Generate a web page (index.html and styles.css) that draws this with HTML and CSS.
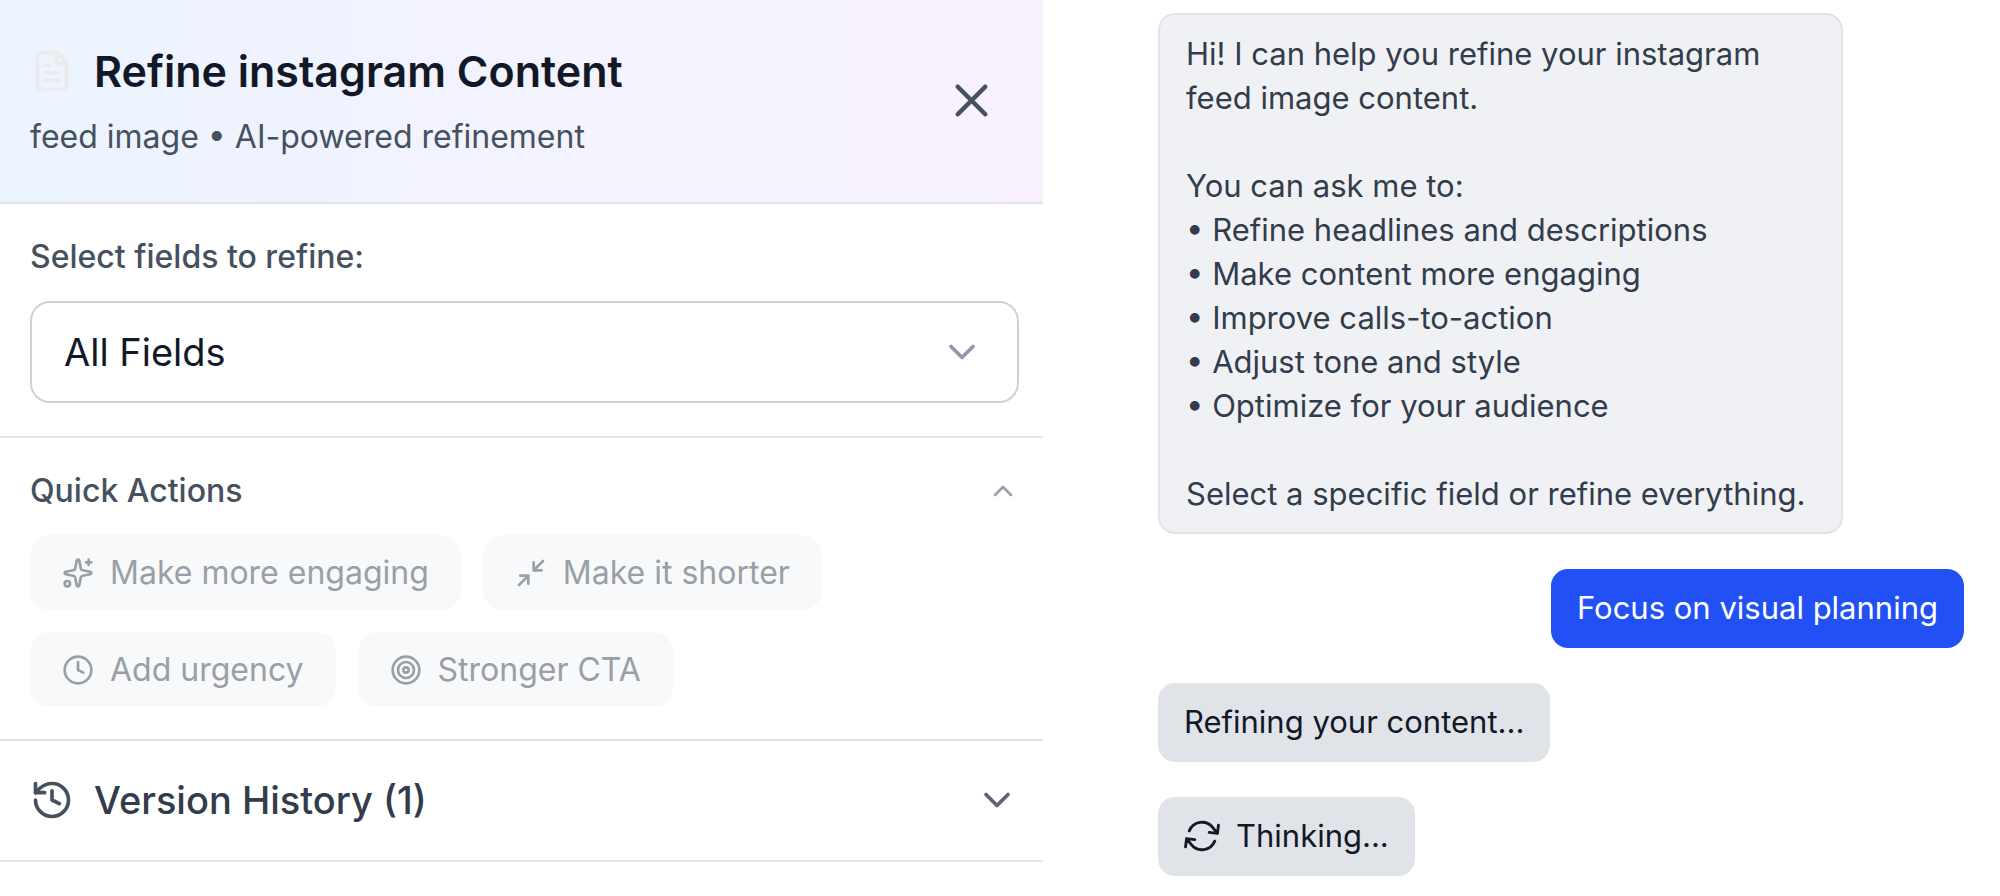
FILE: index.html
```html
<!DOCTYPE html>
<html lang="en">
<head>
<meta charset="utf-8">
<title>Refine instagram Content</title>
<link rel="stylesheet" href="styles.css">
</head>
<body>
<div class="layout">
  <section class="panel">
    <header class="panel-header">
      <div class="heading">
        <div class="title-row">
          <svg class="icon icon-md icon-file" viewBox="0 0 24 24" aria-hidden="true"><path d="M15 2H6a2 2 0 0 0-2 2v16a2 2 0 0 0 2 2h12a2 2 0 0 0 2-2V7Z"/><path d="M14 2v4a2 2 0 0 0 2 2h4"/><path d="M10 9H8M16 13H8M16 17H8"/></svg>
          <h1 class="title">Refine instagram Content</h1>
        </div>
        <p class="subtitle">feed image • AI-powered refinement</p>
      </div>
      <button class="close" type="button" aria-label="Close">
        <svg class="icon icon-lg" viewBox="0 0 24 24" aria-hidden="true"><path d="M18 6 6 18M6 6l12 12"/></svg>
      </button>
    </header>

    <div class="fields">
      <label class="label" for="field-select">Select fields to refine:</label>
      <div class="select-wrap">
        <select class="select" id="field-select"><option>All Fields</option></select>
        <svg class="icon icon-md select-chevron" viewBox="0 0 24 24" aria-hidden="true"><path d="m6 9 6 6 6-6"/></svg>
      </div>
    </div>

    <div class="actions">
      <button class="actions-toggle" type="button" aria-expanded="true">
        <span>Quick Actions</span>
        <svg class="icon icon-sm icon-muted" viewBox="0 0 24 24" aria-hidden="true"><path d="m18 15-6-6-6 6"/></svg>
      </button>
      <div class="chips">
        <button class="chip" type="button" disabled>
          <svg class="icon icon-sm" viewBox="0 0 24 24" aria-hidden="true"><path d="M11.017 2.814a1 1 0 0 1 1.966 0l1.051 5.558a2 2 0 0 0 1.594 1.594l5.558 1.051a1 1 0 0 1 0 1.966l-5.558 1.051a2 2 0 0 0-1.594 1.594l-1.051 5.558a1 1 0 0 1-1.966 0l-1.051-5.558a2 2 0 0 0-1.594-1.594l-5.558-1.051a1 1 0 0 1 0-1.966l5.558-1.051a2 2 0 0 0 1.594-1.594z"/><path d="M20 2v4M22 4h-4"/><circle cx="4" cy="20" r="2"/></svg>
          <span>Make more engaging</span>
        </button>
        <button class="chip" type="button" disabled>
          <svg class="icon icon-sm" viewBox="0 0 24 24" aria-hidden="true"><path d="m14 10 7-7M20 10h-6V4M3 21l7-7M4 14h6v6"/></svg>
          <span>Make it shorter</span>
        </button>
        <button class="chip" type="button" disabled>
          <svg class="icon icon-sm" viewBox="0 0 24 24" aria-hidden="true"><circle cx="12" cy="12" r="10"/><path d="M12 6v6l4 2"/></svg>
          <span>Add urgency</span>
        </button>
        <button class="chip" type="button" disabled>
          <svg class="icon icon-sm" viewBox="0 0 24 24" aria-hidden="true"><circle cx="12" cy="12" r="10"/><circle cx="12" cy="12" r="6"/><circle cx="12" cy="12" r="2"/></svg>
          <span>Stronger CTA</span>
        </button>
      </div>
    </div>

    <button class="history" type="button" aria-expanded="false">
      <svg class="icon icon-md" viewBox="0 0 24 24" aria-hidden="true"><path d="M3 12a9 9 0 1 0 9-9 9.75 9.75 0 0 0-6.74 2.74L3 8"/><path d="M3 3v5h5M12 7v5l4 2"/></svg>
      <span class="history-text">Version History (1)</span>
      <svg class="icon icon-md icon-slate" viewBox="0 0 24 24" aria-hidden="true"><path d="m6 9 6 6 6-6"/></svg>
    </button>
  </section>

  <section class="chat">
    <div class="bubble bubble-intro">Hi! I can help you refine your instagram feed image content.

You can ask me to:
• Refine headlines and descriptions
• Make content more engaging
• Improve calls-to-action
• Adjust tone and style
• Optimize for your audience

Select a specific field or refine everything.</div>
    <div class="bubble bubble-user">Focus on visual planning</div>
    <div class="bubble bubble-status">Refining your content...</div>
    <div class="bubble bubble-status">
      <svg class="spinner" viewBox="1.2 1.2 21.6 21.6" aria-hidden="true"><path transform="rotate(7 12 12)" d="M16.023 9.348h4.992M2.985 19.644v-4.992m0 0h4.992m-4.993 0 3.181 3.183a8.25 8.25 0 0 0 13.803-3.7M4.031 9.865a8.25 8.25 0 0 1 13.803-3.7l3.181 3.182m0-4.991v4.99"/></svg>
      <span>Thinking...</span>
    </div>
  </section>
</div>
</body>
</html>
```
FILE: styles.css
```css
* {
  box-sizing: border-box;
}

body {
  margin: 0;
  background: #fff;
  color: #111827;
  font-family: Inter, "Liberation Sans", sans-serif;
  font-size: 32px;
  line-height: 44px;
}

button,
select {
  margin: 0;
  border: 0;
  background: none;
  color: inherit;
  font: inherit;
}

.layout {
  display: grid;
  grid-template-columns: 1043fr 957fr;
  align-items: start;
}

.icon,
.spinner {
  flex: none;
  fill: none;
  stroke: currentColor;
  stroke-width: 2;
  stroke-linecap: round;
  stroke-linejoin: round;
}

.icon-sm {
  width: 32px;
  height: 32px;
}

.icon-md {
  width: 44px;
  height: 44px;
}

.icon-lg {
  width: 55px;
  height: 55px;
}

.icon-file {
  color: #ebebeb;
}

.icon-muted {
  color: #99a1af;
}

.icon-slate {
  color: #5b6375;
}

.panel-header {
  display: flex;
  align-items: center;
  justify-content: space-between;
  padding: 39px 24px 41px 30px;
  border-bottom: 2px solid #e1e4ea;
  background: linear-gradient(90deg, #ebf4fe, #f1f3fe 35%, #f5f3fe 65%, #f9f2fe);
}

.title-row {
  display: flex;
  align-items: center;
  gap: 20px;
}

.title {
  margin: 0;
  font-size: 43px;
  font-weight: 600;
  line-height: 64px;
}

.subtitle {
  margin: 10px 0 0;
  color: #465160;
  line-height: 48px;
}

.close {
  display: flex;
  padding: 20px;
  color: #465160;
}

.fields {
  padding: 29px 24px 33px 30px;
  border-bottom: 2px solid #e1e4ea;
}

.label {
  display: block;
  margin-bottom: 20px;
  color: #465160;
  font-weight: 500;
  line-height: 48px;
}

.select-wrap {
  display: grid;
  align-items: center;
}

.select-wrap > * {
  grid-area: 1 / 1;
}

.select {
  width: 100%;
  padding: 24px 32px;
  border: 2px solid #cdd1d9;
  border-radius: 20px;
  background: #fff;
  font-size: 38px;
  line-height: 50px;
  appearance: none;
}

.select-chevron {
  justify-self: end;
  margin-right: 35px;
  color: #8f98a8;
  pointer-events: none;
}

.actions {
  padding: 29px 24px 32px 30px;
  border-bottom: 2px solid #e1e4ea;
}

.actions-toggle {
  display: flex;
  align-items: center;
  justify-content: space-between;
  width: 100%;
  padding: 0;
  color: #465160;
  font-weight: 500;
  line-height: 48px;
}

.chips {
  display: flex;
  flex-wrap: wrap;
  gap: 22px;
  margin-top: 20px;
}

.chip {
  display: flex;
  align-items: center;
  gap: 16px;
  padding: 13px 32px;
  border-radius: 20px;
  background: #f8f9fb;
  color: #9a9fa6;
  line-height: 49px;
}

.history {
  display: flex;
  align-items: center;
  gap: 20px;
  width: 100%;
  padding: 32px 24px 33px 30px;
  border-bottom: 2px solid #e1e4ea;
  color: #465160;
  font-size: 38px;
  font-weight: 500;
  line-height: 54px;
  text-align: left;
}

.history-text {
  flex: 1;
  color: #323c4b;
}

.chat {
  display: flex;
  flex-direction: column;
  align-items: flex-start;
  gap: 35px;
  padding: 13px 36px 0 115px;
  font-size: 31px;
}

.bubble {
  display: flex;
  align-items: center;
  gap: 16px;
  max-width: 85%;
  padding: 17px 26px 18px;
  border-radius: 17px;
}

.bubble-intro {
  display: block;
  padding: 17px 26px 16px;
  border: 2px solid #e1e4e9;
  background: #f0f1f5;
  color: #323c4b;
  white-space: pre-line;
}

.bubble-user {
  align-self: flex-end;
  background: #2151f5;
  color: #fff;
}

.bubble-status {
  background: #e0e3e8;
}

.spinner {
  width: 36px;
  height: 36px;
  stroke-width: 1.7;
}
```
